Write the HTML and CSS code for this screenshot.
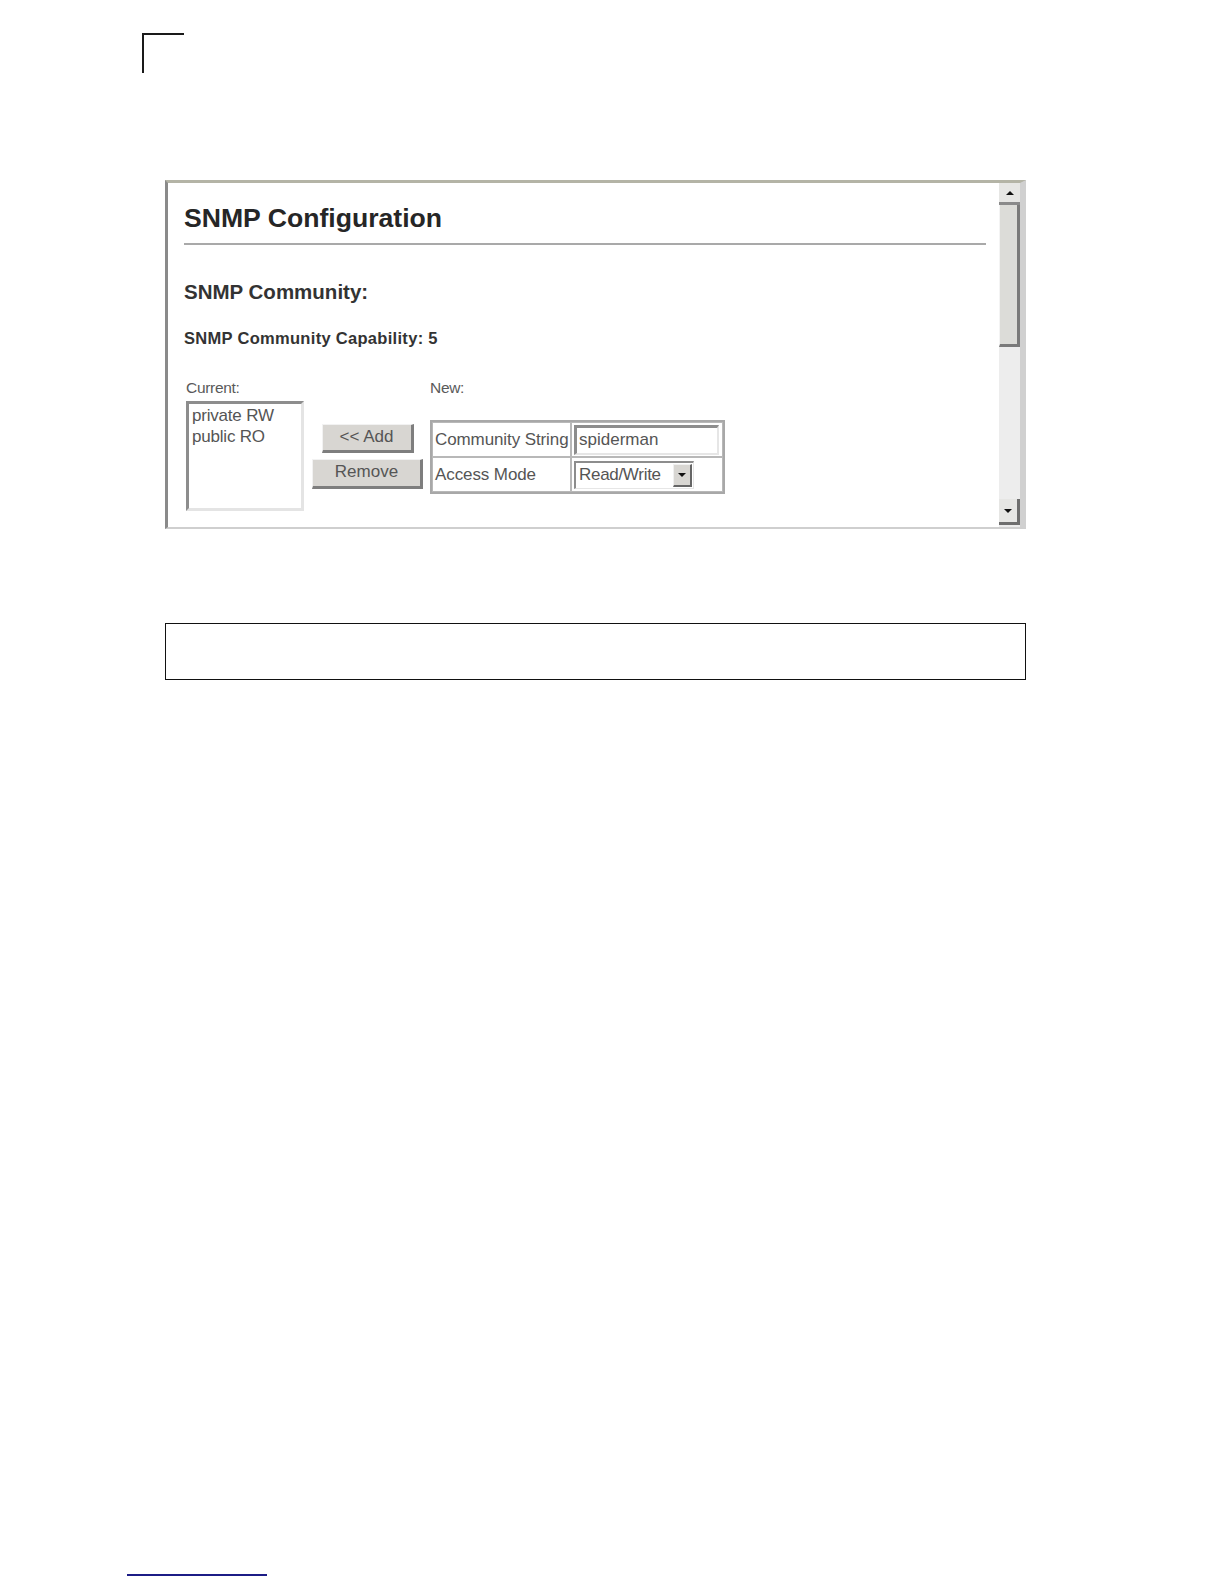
FILE: index.html
```html
<!DOCTYPE html>
<html>
<head>
<meta charset="utf-8">
<link rel="stylesheet" href="styles.css">
</head>
<body>
<div class="page">
  <div class="corner"></div>
  <div class="shot">
    <div class="content">
      <h1 class="title">SNMP Configuration</h1>
      <div class="rule"></div>
      <h2 class="sub">SNMP Community:</h2>
      <h3 class="cap">SNMP Community Capability: 5</h3>
      <div class="form">
        <div class="col-current">
          <div class="lbl">Current:</div>
          <div class="listbox">
            <div>private RW</div>
            <div>public RO</div>
          </div>
        </div>
        <div class="col-buttons">
          <div class="btn btn-add">&lt;&lt; Add</div>
          <div class="btn btn-remove">Remove</div>
        </div>
        <div class="col-new">
          <div class="lbl">New:</div>
          <table class="newtbl">
            <tr>
              <td class="k">Community String</td>
              <td class="v"><div class="input">spiderman</div></td>
            </tr>
            <tr>
              <td class="k">Access Mode</td>
              <td class="v"><div class="select"><span class="sel-text">Read/Write</span><span class="sel-btn"><span class="tri"></span></span></div></td>
            </tr>
          </table>
        </div>
      </div>
    </div>
    <div class="scrollbar">
      <div class="sb-btn sb-up"><span class="tri-up"></span></div>
      <div class="sb-thumb"></div>
      <div class="sb-track"></div>
      <div class="sb-btn sb-down"><span class="tri-down"></span></div>
    </div>
  </div>
  <div class="note"></div>
  <div class="footline"></div>
</div>
</body>
</html>
```
FILE: styles.css
```css
html, body {
  margin: 0;
  padding: 0;
  background: #ffffff;
}
.page {
  width: 1224px;
  height: 1584px;
  position: relative;
  overflow: hidden;
  font-family: "Liberation Sans", Arial, sans-serif;
  padding-top: 33px;
  box-sizing: border-box;
}
.corner {
  margin-left: 142px;
  width: 42px;
  height: 40px;
  border-top: 2px solid #1a1a1a;
  border-left: 2px solid #1a1a1a;
  box-sizing: border-box;
}
.shot {
  margin-left: 165px;
  margin-top: 107px;
  width: 861px;
  height: 349px;
  box-sizing: border-box;
  border-top: 3px solid #b4b4a6;
  border-left: 3px solid #8a8a8a;
  border-right: 6px solid #d0d0d0;
  border-bottom: 2px solid #cfcfcf;
  display: flex;
  background: #fff;
  overflow: hidden;
}
.content {
  flex: 1;
  padding: 20px 13px 0 16px;
  overflow: hidden;
}
.title {
  margin: 0;
  font-size: 26.6px;
  line-height: 30px;
  font-weight: bold;
  color: #262626;
}
.rule {
  margin-top: 10px;
  height: 2px;
  background: #a9a9a9;
}
.sub {
  margin: 35px 0 0 0;
  font-size: 20.5px;
  line-height: 24px;
  font-weight: bold;
  color: #333;
}
.cap {
  margin: 24px 0 0 0;
  font-size: 16.5px;
  line-height: 20px;
  font-weight: bold;
  color: #333;
  letter-spacing: 0.3px;
}
.form {
  display: flex;
  margin-top: 31px;
  color: #555;
  font-size: 17px;
}
.lbl {
  font-size: 15.5px;
  line-height: 18px;
  color: #5a5a5a;
  letter-spacing: -0.3px;
}
.col-current {
  margin-left: 2px;
  width: 118px;
}
.listbox {
  margin-top: 4px;
  width: 118px;
  height: 110px;
  box-sizing: border-box;
  border-top: 3px solid #8d8d8d;
  border-left: 3px solid #8d8d8d;
  border-right: 3px solid #e4e4e4;
  border-bottom: 3px solid #e4e4e4;
  padding: 1px 0 0 3px;
  line-height: 21px;
  font-size: 17px;
  color: #555;
  letter-spacing: -0.2px;
}
.col-buttons {
  margin-left: 8px;
  width: 111px;
  display: flex;
  flex-direction: column;
  align-items: center;
  padding-top: 45px;
}
.btn {
  box-sizing: border-box;
  background: #d8d6d2;
  border-top: 1px solid #f2f2f2;
  border-left: 1px solid #f2f2f2;
  border-right: 3px solid #7e7e7e;
  border-bottom: 3px solid #7e7e7e;
  text-align: center;
  color: #555;
  font-size: 17px;
  line-height: 24px;
}
.btn-add {
  width: 92px;
  height: 29px;
}
.btn-remove {
  width: 111px;
  height: 30px;
  margin-top: 6px;
}
.col-new {
  margin-left: 7px;
}
.newtbl {
  margin-top: 23px;
  border-collapse: separate;
  border-spacing: 0;
  border: 2px solid #a8a8a8;
  font-size: 17px;
  color: #555;
}
.newtbl td {
  border: 1px solid #b8b8b8;
  padding: 0;
  height: 33px;
}
.newtbl td.k {
  width: 135px;
  padding-left: 2px;
  letter-spacing: -0.1px;
}
.newtbl td.v {
  width: 148px;
  padding-left: 2px;
}
.input {
  width: 145px;
  height: 30px;
  box-sizing: border-box;
  border-top: 3px solid #8d8d8d;
  border-left: 3px solid #8d8d8d;
  border-right: 2px solid #e6e6e6;
  border-bottom: 2px solid #e6e6e6;
  padding-left: 2px;
  line-height: 24px;
  color: #555;
}
.select {
  width: 120px;
  height: 28px;
  box-sizing: border-box;
  border-top: 2px solid #8d8d8d;
  border-left: 2px solid #8d8d8d;
  border-right: 1px solid #e6e6e6;
  border-bottom: 1px solid #e6e6e6;
  display: flex;
  align-items: center;
}
.sel-text {
  flex: 1;
  padding-left: 3px;
  line-height: 24px;
  letter-spacing: -0.3px;
}
.sel-btn {
  width: 19px;
  height: 23px;
  box-sizing: border-box;
  background: #d8d6d2;
  border-top: 1px solid #f0f0f0;
  border-left: 1px solid #f0f0f0;
  border-right: 2px solid #666;
  border-bottom: 2px solid #666;
  margin-right: 1px;
  display: flex;
  align-items: center;
  justify-content: center;
}
.tri {
  width: 0;
  height: 0;
  border-left: 4px solid transparent;
  border-right: 4px solid transparent;
  border-top: 4px solid #111;
}
.scrollbar {
  width: 21px;
  display: flex;
  flex-direction: column;
  background: #ececec;
}
.sb-btn {
  height: 22px;
  box-sizing: border-box;
  background: #e6e6e4;
  display: flex;
  align-items: center;
  justify-content: center;
}
.sb-up {
  border-bottom: 3px solid #8a8a8a;
}
.sb-down {
  height: 26px;
  border-right: 3px solid #6e6e6e;
  border-bottom: 3px solid #6e6e6e;
  margin-bottom: 2px;
}
.tri-up {
  width: 0;
  height: 0;
  border-left: 4px solid transparent;
  border-right: 4px solid transparent;
  border-bottom: 4px solid #111;
}
.tri-down {
  width: 0;
  height: 0;
  border-left: 4px solid transparent;
  border-right: 4px solid transparent;
  border-top: 4px solid #111;
}
.sb-thumb {
  height: 142px;
  box-sizing: border-box;
  background: #dcdcd8;
  border-left: 1px solid #f4f4f4;
  border-right: 3px solid #7a7a7a;
  border-bottom: 3px solid #7a7a7a;
}
.sb-track {
  flex: 1;
  background: #ededed;
}
.note {
  margin-left: 165px;
  margin-top: 94px;
  width: 861px;
  height: 57px;
  box-sizing: border-box;
  border: 1px solid #111;
}
.footline {
  margin-left: 127px;
  margin-top: 894px;
  width: 140px;
  height: 2px;
  background: #1c1c86;
}
```
